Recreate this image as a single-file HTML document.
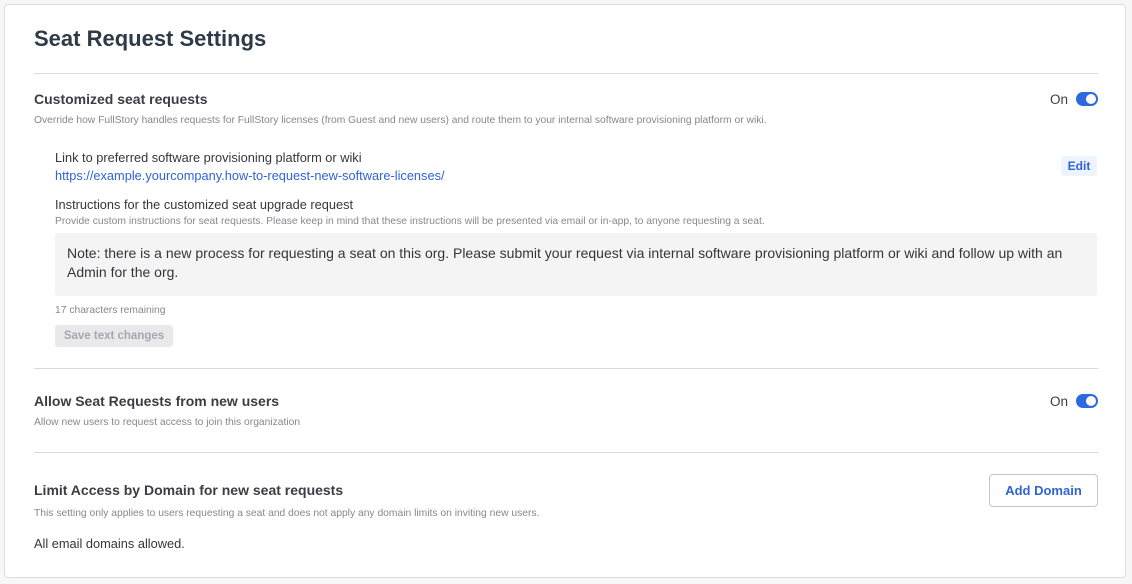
<!DOCTYPE html>
<html><head><meta charset="utf-8"><style>
body{margin:0;width:1132px;height:584px;background:#f7f7f8;font-family:"Liberation Sans",sans-serif;overflow:hidden;position:relative}
.card{position:absolute;left:4px;top:4px;width:1122px;height:574px;background:#fff;border:1px solid #dcdde2;border-radius:4px;box-sizing:border-box}
.a{position:absolute;white-space:nowrap}
.hr{position:absolute;left:34px;width:1064px;height:1px;background:#d9dade}
.h{font-size:14px;font-weight:bold;color:#3a3d44}
.s{font-size:10.3px;color:#85888f}
.t{font-size:12.8px;color:#33363c}
.tog{position:absolute;width:22px;height:14px;border-radius:7px;background:#2d6ae0}
.tog:after{content:"";position:absolute;right:2px;top:2px;width:10px;height:10px;border-radius:50%;background:#fff}
.on{font-size:13.5px;color:#3a3d44}
</style></head><body>
<div class="card"></div>
<div class="a" style="left:34px;top:26px;font-size:22px;font-weight:bold;color:#2f3a48">Seat Request Settings</div>
<div class="hr" style="top:73px"></div>
<div class="a h" style="left:34px;top:91px">Customized seat requests</div>
<div class="a on" style="left:1050px;top:92px">On</div><div class="tog" style="left:1076px;top:92px"></div>
<div class="a s" style="left:34px;top:115px">Override how FullStory handles requests for FullStory licenses (from Guest and new users) and route them to your internal software provisioning platform or wiki.</div>
<div class="a t" style="left:55px;top:150px">Link to preferred software provisioning platform or wiki</div>
<div class="a t" style="left:55px;top:168px;color:#2f64d6">https://example.yourcompany.how-to-request-new-software-licenses/</div>
<div class="a" style="left:1061px;top:156px;width:36px;height:20px;background:#eef4fd;border-radius:3px;color:#2f64d6;font-size:12px;font-weight:bold;text-align:center;line-height:20px">Edit</div>
<div class="a t" style="left:55px;top:197px">Instructions for the customized seat upgrade request</div>
<div class="a s" style="left:55px;top:216px">Provide custom instructions for seat requests. Please keep in mind that these instructions will be presented via email or in-app, to anyone requesting a seat.</div>
<div class="a" style="left:55px;top:233px;width:1042px;height:63px;background:#f4f4f5;border-radius:3px;white-space:normal;box-sizing:border-box;padding:11px 12px;font-size:14px;line-height:19px;color:#33363c">Note: there is a new process for requesting a seat on this org. Please submit your request via internal software provisioning platform or wiki and follow up with an Admin for the org.</div>
<div class="a s" style="left:55px;top:305px">17 characters remaining</div>
<div class="a" style="left:55px;top:325px;width:118px;height:22px;background:#e9e9ec;border-radius:3px;color:#a5a7ad;font-size:11.5px;font-weight:bold;text-align:center;line-height:22px">Save text changes</div>
<div class="hr" style="top:368px"></div>
<div class="a h" style="left:34px;top:393px">Allow Seat Requests from new users</div>
<div class="a on" style="left:1050px;top:394px">On</div><div class="tog" style="left:1076px;top:394px"></div>
<div class="a s" style="left:34px;top:417px">Allow new users to request access to join this organization</div>
<div class="hr" style="top:452px"></div>
<div class="a h" style="left:34px;top:482px">Limit Access by Domain for new seat requests</div>
<div class="a" style="left:989px;top:474px;width:109px;height:33px;box-sizing:border-box;border:1px solid #c3c6cd;border-radius:4px;color:#2f64d6;font-size:13px;font-weight:bold;text-align:center;line-height:31px">Add Domain</div>
<div class="a s" style="left:34px;top:508px">This setting only applies to users requesting a seat and does not apply any domain limits on inviting new users.</div>
<div class="a t" style="left:34px;top:536px">All email domains allowed.</div>
</body></html>
